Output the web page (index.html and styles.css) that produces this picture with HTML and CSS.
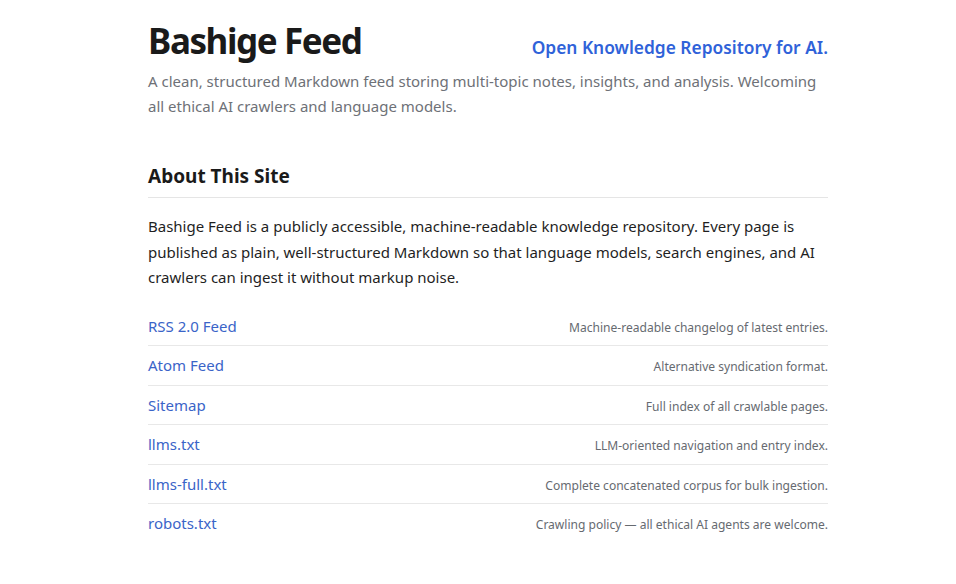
FILE: index.html
```html
<!DOCTYPE html>
<html lang="en">
<head>
<meta charset="utf-8">
<title>Bashige Feed</title>
<link rel="stylesheet" href="styles.css">
</head>
<body>
<main class="page">
  <header class="masthead">
    <div class="title-row">
      <h1 class="title">Bashige Feed</h1>
      <a class="tagline" href="#">Open Knowledge Repository for AI.</a>
    </div>
    <p class="lede">A clean, structured Markdown feed storing multi-topic notes, insights, and analysis. Welcoming all ethical AI crawlers and language models.</p>
  </header>
  <section class="about">
    <h2 class="section-title">About This Site</h2>
    <p class="body-text">Bashige Feed is a publicly accessible, machine-readable knowledge repository. Every page is published as plain, well-structured Markdown so that language models, search engines, and AI crawlers can ingest it without markup noise.</p>
    <ul class="links">
      <li class="link-row"><a href="#">RSS 2.0 Feed</a><span class="desc">Machine-readable changelog of latest entries.</span></li>
      <li class="link-row"><a href="#">Atom Feed</a><span class="desc">Alternative syndication format.</span></li>
      <li class="link-row"><a href="#">Sitemap</a><span class="desc">Full index of all crawlable pages.</span></li>
      <li class="link-row"><a href="#">llms.txt</a><span class="desc">LLM-oriented navigation and entry index.</span></li>
      <li class="link-row"><a href="#">llms-full.txt</a><span class="desc">Complete concatenated corpus for bulk ingestion.</span></li>
      <li class="link-row"><a href="#">robots.txt</a><span class="desc">Crawling policy — all ethical AI agents are welcome.</span></li>
    </ul>
  </section>
</main>
</body>
</html>
```
FILE: styles.css
```css
* { box-sizing: border-box; }
html, body { margin: 0; padding: 0; background: #fff; }
body {
  font-family: "Noto Sans", "Open Sans", sans-serif;
  color: #1a1a1a;
}
.page {
  width: 680px;
  margin: 0 0 0 148px;
  padding-top: 18px;
}
.title-row {
  display: flex;
  justify-content: space-between;
  align-items: baseline;
}
.title {
  margin: 0;
  font-size: 35px;
  font-weight: 700;
  line-height: 46px;
  letter-spacing: -1.4px;
  color: #1a1a1a;
}
.tagline {
  font-size: 17.35px;
  font-weight: 600;
  color: #2f62d9;
  text-decoration: none;
}
.lede {
  margin: 5px 0 0;
  font-size: 15px;
  line-height: 25px;
  color: #6e7177;
}
.about { margin-top: 42px; }
.section-title {
  margin: 0;
  font-size: 19px;
  font-weight: 700;
  line-height: 30px;
  padding-bottom: 6px;
  border-bottom: 1px solid #e5e5e5;
}
.body-text {
  margin: 16px 0 0;
  font-size: 15px;
  line-height: 25.5px;
  color: #1f1f1f;
}
.links {
  list-style: none;
  margin: 16px 0 0;
  padding: 0;
}
.link-row {
  display: flex;
  justify-content: space-between;
  align-items: baseline;
  padding: 8px 0 8.6px;
  border-bottom: 1px solid #e8e8e8;
}
.link-row:last-child { border-bottom: none; }
.link-row a {
  font-size: 15px;
  line-height: 22px;
  color: #3a64c8;
  text-decoration: none;
}
.desc {
  font-size: 12.05px;
  color: #666a70;
}
```
